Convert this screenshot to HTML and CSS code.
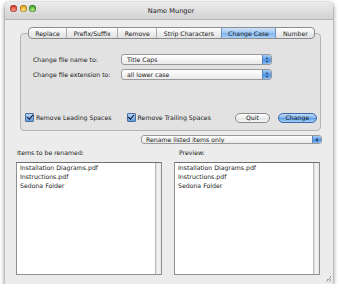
FILE: index.html
```html
<!DOCTYPE html>
<html lang="en">
<head>
    <meta charset="UTF-8">
    <title>Name Munger</title>
    <link rel="stylesheet" href="styles.css">
</head>
<body>
    <div class="window">
        <div class="titlebar">
            <div class="lights">
                <span class="light red"></span>
                <span class="light yellow"></span>
                <span class="light green"></span>
            </div>
            <div class="title">Name Munger</div>
        </div>
        <div class="content">
            <div class="tabbox">
                <div class="tabs">
                    <span class="tab">Replace</span>
                    <span class="tab">Prefix/Suffix</span>
                    <span class="tab">Remove</span>
                    <span class="tab">Strip Characters</span>
                    <span class="tab selected">Change Case</span>
                    <span class="tab">Number</span>
                </div>
                <div class="panel">
                    <div class="form-row">
                        <label class="field-label">Change file name to:</label>
                        <div class="popup wide"><span class="popup-text">Title Caps</span><span class="popup-arrow"></span></div>
                    </div>
                    <div class="form-row">
                        <label class="field-label">Change file extension to:</label>
                        <div class="popup wide"><span class="popup-text">all lower case</span><span class="popup-arrow"></span></div>
                    </div>
                    <div class="option-row">
                        <label class="check"><span class="checkbox"></span>Remove Leading Spaces</label>
                        <label class="check second"><span class="checkbox"></span>Remove Trailing Spaces</label>
                        <span class="button quit">Quit</span>
                        <span class="button default">Change</span>
                    </div>
                </div>
            </div>
            <div class="rename-row">
                <div class="popup small"><span class="popup-text">Rename listed items only</span><span class="popup-arrow"></span></div>
            </div>
            <div class="lists">
                <div class="list-col">
                    <div class="list-label">Items to be renamed:</div>
                    <div class="list">
                        <div class="list-items">
                            <div>Installation Diagrams.pdf</div>
                            <div>Instructions.pdf</div>
                            <div>Sedona Folder</div>
                        </div>
                        <div class="scroller"></div>
                    </div>
                </div>
                <div class="list-col">
                    <div class="list-label">Preview:</div>
                    <div class="list">
                        <div class="list-items">
                            <div>Installation Diagrams.pdf</div>
                            <div>Instructions.pdf</div>
                            <div>Sedona Folder</div>
                        </div>
                        <div class="scroller"></div>
                    </div>
                </div>
            </div>
        </div>
        <span class="grip"></span>
    </div>
</body>
</html>
```

FILE: styles.css
```css
body {
    margin: 0;
    background: #fff;
    font-family: "DejaVu Sans", Verdana, sans-serif;
    font-size: 6.2px;
    color: #1a1a1a;
}
.window {
    position: relative;
    width: 328px;
    height: 282px;
    margin: 2px 0 0 5px;
    background: #ececec;
    border-radius: 4px 4px 0 0;
    box-shadow: 0 2px 5px rgba(0, 0, 0, 0.55), 0 0 1px rgba(0, 0, 0, 0.4);
    display: flex;
    flex-direction: column;
}
.titlebar {
    position: relative;
    height: 18px;
    border-radius: 4px 4px 0 0;
    background: linear-gradient(#ebebeb, #d2d2d2);
    border-bottom: 1px solid #b5b5b5;
    box-sizing: border-box;
    display: flex;
    align-items: center;
    justify-content: center;
}
.lights {
    position: absolute;
    left: 5px;
    top: 3px;
    display: flex;
    gap: 2.5px;
}
.light {
    width: 7px;
    height: 7px;
    border-radius: 50%;
    box-shadow: inset 0 0 0 0.5px rgba(0, 0, 0, 0.35);
}
.red {
    background: radial-gradient(circle at 50% 70%, #ff9a8a, #d0362a 70%);
}
.yellow {
    background: radial-gradient(circle at 50% 70%, #ffe28a, #d99a14 70%);
}
.green {
    background: radial-gradient(circle at 50% 70%, #b6f08a, #3d9a22 70%);
}
.title {
    font-size: 6.6px;
    color: #222;
    margin-left: 4px;
}
.content {
    flex: 1;
    display: flex;
    flex-direction: column;
    padding-top: 7px;
}
.tabbox {
    margin: 0 12px 0 15px;
    display: flex;
    flex-direction: column;
    align-items: center;
}
.tabs {
    position: relative;
    z-index: 1;
    display: flex;
    height: 12px;
    margin-bottom: -6px;
    margin-left: 2px;
    border: 1px solid #8c8c8c;
    border-radius: 4px;
    box-sizing: border-box;
    overflow: hidden;
    background: linear-gradient(#ffffff, #ececec 55%, #e2e2e2);
}
.tab {
    display: flex;
    align-items: center;
    padding: 0 6.5px;
    border-left: 1px solid #ababab;
    color: #1a1a1a;
}
.tab:first-child {
    border-left: none;
}
.tab.selected {
    background: linear-gradient(#cfe4fa, #9cc6f2 50%, #7fb3ec 51%, #a9d0f7);
    border-left-color: #6e93c0;
}
.tab.selected + .tab {
    border-left-color: #6e93c0;
}
.panel {
    align-self: stretch;
    height: 98px;
    box-sizing: border-box;
    border: 1px solid #b4b4b4;
    border-radius: 4px;
    background: #e2e2e2;
    padding: 20px 0 0 12px;
    display: flex;
    flex-direction: column;
}
.form-row {
    display: flex;
    align-items: center;
    height: 11px;
    margin-bottom: 4px;
}
.field-label {
    width: 88px;
}
.popup {
    display: flex;
    align-items: center;
    box-sizing: border-box;
    border: 1px solid #9a9a9a;
    border-radius: 3px;
    background: linear-gradient(#ffffff, #f4f4f4 50%, #e9e9e9);
    overflow: hidden;
}
.popup.wide {
    width: 151px;
    height: 11px;
}
.popup-text {
    flex: 1;
    padding-left: 5px;
}
.popup-arrow {
    position: relative;
    width: 8px;
    align-self: stretch;
    background: linear-gradient(#a9cdf5, #5b9ae3 50%, #3f86dc 51%, #8dc0f3);
    border-left: 1px solid #5c86bb;
}
.popup-arrow::before,
.popup-arrow::after {
    content: "";
    position: absolute;
    left: 2.5px;
    border-left: 1.5px solid transparent;
    border-right: 1.5px solid transparent;
}
.popup-arrow::before {
    top: 1.5px;
    border-bottom: 2px solid #1b2a44;
}
.popup-arrow::after {
    bottom: 1.5px;
    border-top: 2px solid #1b2a44;
}
.option-row {
    display: flex;
    align-items: center;
    margin: 28px 0 0 -8px;
    height: 11px;
}
.check {
    display: flex;
    align-items: center;
    gap: 2px;
}
.check.second {
    margin-left: 15px;
}
.checkbox {
    position: relative;
    width: 7px;
    height: 7px;
    border: 1px solid #4a6d9c;
    border-radius: 1px;
    background: linear-gradient(#b8d6f7, #5d9ae0);
}
.checkbox::after {
    content: "";
    position: absolute;
    left: 1.5px;
    top: -1px;
    width: 2.5px;
    height: 5px;
    border-right: 1.5px solid #101a2c;
    border-bottom: 1.5px solid #101a2c;
    transform: rotate(40deg);
}
.button {
    display: flex;
    align-items: center;
    justify-content: center;
    height: 10px;
    box-sizing: border-box;
    border-radius: 6px;
}
.button.quit {
    width: 35px;
    margin-left: 24px;
    border: 1px solid #8a8a8a;
    background: linear-gradient(#ffffff, #eeeeee 50%, #e2e2e2 51%, #f8f8f8);
}
.button.default {
    width: 39px;
    margin-left: 8px;
    border: 1px solid #3a68a8;
    background: linear-gradient(#c2dcf8, #7db2ee 50%, #5a9be6 51%, #a6cff7);
}
.rename-row {
    display: flex;
    margin: 4px 11px 0 136px;
}
.popup.small {
    flex: 1;
    height: 9px;
}
.popup.small .popup-text {
    padding-left: 4px;
}
.lists {
    display: flex;
    gap: 12px;
    margin: 4px 13px 0 11px;
}
.list-col {
    flex: 1;
    display: flex;
    flex-direction: column;
}
.list-col + .list-col .list-label {
    padding-left: 5px;
}
.list-label {
    height: 9px;
    line-height: 9px;
    padding-left: 1px;
    margin-bottom: 5px;
}
.list {
    display: flex;
    height: 111px;
    border: 1px solid #8f8f8f;
    border-top-color: #6f6f6f;
    background: #fff;
}
.list-items {
    flex: 1;
    padding: 0 3px;
    line-height: 9px;
}
.scroller {
    width: 5px;
    background: linear-gradient(90deg, #dcdcdc, #f6f6f6 40%, #e6e6e6);
    border-left: 1px solid #b8b8b8;
}
.grip {
    position: absolute;
    right: 2px;
    bottom: 2px;
    width: 6px;
    height: 6px;
    background: linear-gradient(135deg, transparent 50%, #a0a0a0 50%, #a0a0a0 60%, transparent 60%, transparent 75%, #a0a0a0 75%, #a0a0a0 85%, transparent 85%);
}
```
